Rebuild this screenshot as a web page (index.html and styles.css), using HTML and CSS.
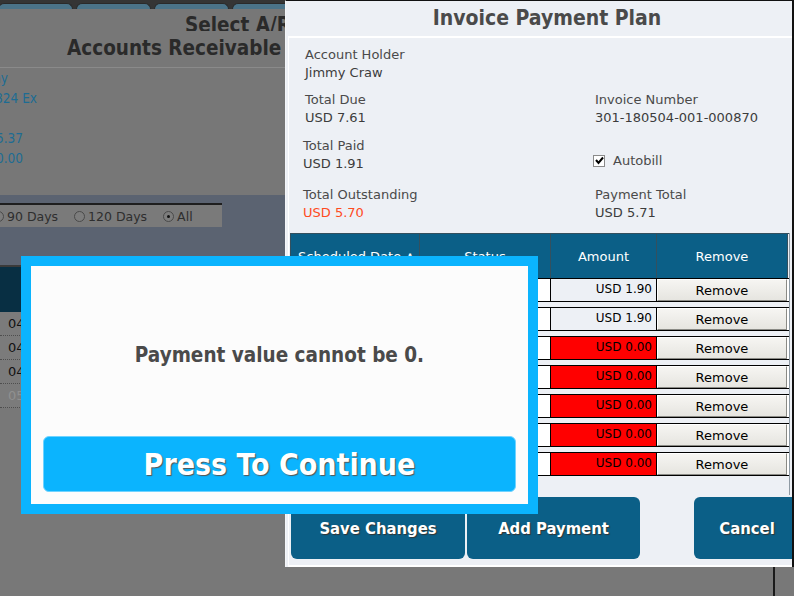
FILE: index.html
```html
<!DOCTYPE html>
<html lang="en">
<head>
    <meta charset="UTF-8">
    <meta name="viewport" content="width=device-width, initial-scale=1.0">
    <title>Invoice Payment Plan</title>
    <link rel="stylesheet" href="styles.css">
</head>
<body>
    <!-- Accounts receivable screen, dimmed behind the popups -->
    <div class="app">
        <div class="tabs">
            <span class="tab"></span>
            <span class="tab"></span>
            <span class="tab"></span>
            <span class="tab"></span>
        </div>

        <div class="ar-header">
            <div class="ar-subtitle"><span>Select A/R Account</span></div>
            <div class="ar-title">Accounts Receivable</div>
        </div>

        <div class="ar-info">
            <div class="ar-values">
                <span class="end-far">Jimmy</span>
                <span>Acct 1824 Ex</span>
                <span>&nbsp;</span>
                <span class="end-mid">USD 5.37</span>
                <span class="end-mid">USD 0.00</span>
            </div>
        </div>

        <div class="filter-area">
            <div class="filter-bar">
                <label class="radio"><span class="radio-dot"></span>90 Days</label>
                <label class="radio"><span class="radio-dot"></span>120 Days</label>
                <label class="radio"><span class="radio-dot checked"></span>All</label>
            </div>
        </div>

        <div class="ar-table">
            <div class="ar-table-head"></div>
            <div class="ar-row">04/12/2018</div>
            <div class="ar-row">04/19/2018</div>
            <div class="ar-row">04/26/2018</div>
            <div class="ar-row muted">05/04/2018</div>
        </div>

        <div class="app-bottom">
            <div class="app-bottom-col"></div>
        </div>
    </div>

    <!-- Payment plan window -->
    <div class="plan-window">
        <div class="plan-title">Invoice Payment Plan</div>
        <div class="plan-body">
            <div class="plan-fields">
                <div class="field row-1">
                    <div class="field-label">Account Holder</div>
                    <div class="field-value">Jimmy Craw</div>
                </div>

                <div class="field row-2">
                    <div class="field-label">Total Due</div>
                    <div class="field-value">USD 7.61</div>
                </div>
                <div class="field row-2">
                    <div class="field-label">Invoice Number</div>
                    <div class="field-value">301-180504-001-000870</div>
                </div>

                <div class="field row-3 shift">
                    <div class="field-label">Total Paid</div>
                    <div class="field-value">USD 1.91</div>
                </div>
                <div class="field row-3 autobill">
                    <span class="checkbox">
                        <svg width="9" height="9" viewBox="0 0 9 9"><path d="M1 4 L3.5 7 L8 1.5" fill="none" stroke="#000" stroke-width="2"/></svg>
                    </span>
                    Autobill
                </div>

                <div class="field row-4 shift">
                    <div class="field-label">Total Outstanding</div>
                    <div class="field-value outstanding">USD 5.70</div>
                </div>
                <div class="field row-4">
                    <div class="field-label">Payment Total</div>
                    <div class="field-value">USD 5.71</div>
                </div>
            </div>

            <div class="payments">
                <div class="payments-head">
                    <div class="head-cell date">Scheduled Date &#8743;</div>
                    <div class="head-cell">Status</div>
                    <div class="head-cell">Amount</div>
                    <div class="head-cell">Remove</div>
                </div>
                <div class="payment-row">
                    <div class="cell"></div><div class="cell"></div>
                    <div class="cell amount">USD 1.90</div>
                    <div class="cell"><button class="remove-btn">Remove</button></div>
                </div>
                <div class="payment-row">
                    <div class="cell"></div><div class="cell"></div>
                    <div class="cell amount">USD 1.90</div>
                    <div class="cell"><button class="remove-btn">Remove</button></div>
                </div>
                <div class="payment-row">
                    <div class="cell"></div><div class="cell"></div>
                    <div class="cell amount zero">USD 0.00</div>
                    <div class="cell"><button class="remove-btn">Remove</button></div>
                </div>
                <div class="payment-row">
                    <div class="cell"></div><div class="cell"></div>
                    <div class="cell amount zero">USD 0.00</div>
                    <div class="cell"><button class="remove-btn">Remove</button></div>
                </div>
                <div class="payment-row">
                    <div class="cell"></div><div class="cell"></div>
                    <div class="cell amount zero">USD 0.00</div>
                    <div class="cell"><button class="remove-btn">Remove</button></div>
                </div>
                <div class="payment-row">
                    <div class="cell"></div><div class="cell"></div>
                    <div class="cell amount zero">USD 0.00</div>
                    <div class="cell"><button class="remove-btn">Remove</button></div>
                </div>
                <div class="payment-row">
                    <div class="cell"></div><div class="cell"></div>
                    <div class="cell amount zero">USD 0.00</div>
                    <div class="cell"><button class="remove-btn">Remove</button></div>
                </div>
            </div>

            <div class="plan-actions">
                <button class="action-btn save">Save Changes</button>
                <button class="action-btn add">Add Payment</button>
                <button class="action-btn cancel">Cancel</button>
            </div>
        </div>
    </div>

    <!-- Validation message -->
    <div class="alert">
        <div class="alert-message">Payment value cannot be 0.</div>
        <button class="alert-btn">Press To Continue</button>
    </div>
</body>
</html>
```

FILE: styles.css
```css
* {
    margin: 0;
    padding: 0;
    box-sizing: border-box;
}

body {
    font-family: "DejaVu Sans", "Liberation Sans", sans-serif;
    font-size: 13px;
    width: 794px;
    height: 596px;
    overflow: hidden;
    background: #787878;
    position: relative;
}

button {
    font-family: inherit;
}

/* headings and big buttons use the narrow bold face */
.ar-header,
.plan-title,
.action-btn,
.alert-message,
.alert-btn {
    font-family: "DejaVu Sans Condensed", "DejaVu Sans", sans-serif;
    font-weight: bold;
}

/* ---------- background screen ---------- */

.app {
    display: flex;
    flex-direction: column;
    height: 596px;
}

.tabs {
    height: 9px;
    background: #353535;
    padding-top: 3px;
    display: flex;
    gap: 3px;
    overflow: hidden;
}

.tab {
    width: 75px;
    flex-shrink: 0;
    background: #4b7388;
    border: 1px solid #2a2a2a;
    border-bottom: none;
    border-radius: 6px 6px 0 0;
}

.tab:first-child {
    margin-left: -2px;
}

.ar-header {
    background: #777777;
    height: 59px;
    border-bottom: 1px solid #8a8a8a;
    color: #2a2a2a;
    font-size: 20.5px;
}

.ar-subtitle {
    height: 22px;
    overflow: hidden;
    padding-left: 185px;
    white-space: nowrap;
}

.ar-subtitle span {
    display: block;
    line-height: 33px;
}

.ar-title {
    padding-left: 67px;
    margin-top: 5px;
    line-height: 24px;
    white-space: nowrap;
}

.ar-info {
    background: #777777;
    height: 127px;
}

.ar-values {
    width: 37px;
    display: flex;
    flex-direction: column;
    align-items: flex-end;
    color: #1d6c93;
    font-family: "DejaVu Sans Condensed", "DejaVu Sans", sans-serif;
    font-size: 13.5px;
    line-height: 20px;
    white-space: nowrap;
}

.ar-values .end-far {
    margin-right: 29px;
}

.ar-values .end-mid {
    margin-right: 14px;
}

.filter-area {
    background: #5b6371;
    height: 70px;
    padding-top: 8px;
}

.filter-bar {
    width: 222px;
    height: 24px;
    background: #7a7a7a;
    border-top: 2px solid #1e1e1e;
    display: flex;
    align-items: center;
    gap: 16px;
    color: #2e2e2e;
    font-size: 12.5px;
}

.radio {
    display: flex;
    align-items: center;
    gap: 3px;
}

.radio:first-child {
    margin-left: -7px;
}

.radio-dot {
    width: 11px;
    height: 11px;
    border-radius: 50%;
    border: 1px solid #4a4a4a;
    background: #7d7d7d;
    position: relative;
}

.radio-dot.checked::after {
    content: "";
    position: absolute;
    left: 3px;
    top: 3px;
    width: 3px;
    height: 3px;
    border-radius: 50%;
    background: #111;
}

.ar-table {
    border-top: 2px solid #3a3a3a;
}

.ar-table-head {
    height: 45px;
    background: #082f43;
}

.ar-row {
    height: 24px;
    line-height: 24px;
    background: #7b7b7b;
    border-bottom: 1px dotted #4e4e4e;
    padding-left: 8px;
    color: #111;
    font-size: 13px;
}

.ar-row.muted {
    color: #909090;
}

.app-bottom {
    flex: 1;
    display: flex;
}

.app-bottom-col {
    width: 775px;
    border-right: 2px solid #1a1a1a;
}

/* ---------- payment plan window ---------- */

.plan-window {
    position: absolute;
    left: 285px;
    top: 0;
    width: 509px;
    height: 567px;
    background: #edf0f5;
    border-top: 1px solid #111;
    border-right: 2px solid #111;
    border-left: 1px solid #f4f6f9;
    display: flex;
    flex-direction: column;
}

.plan-title {
    height: 35px;
    line-height: 35px;
    text-align: center;
    padding-left: 16px;
    font-size: 21px;
    color: #4a4a4a;
}

.plan-body {
    flex: 1;
    margin-left: 2px;
    border-top: 2px solid #ffffff;
    border-left: 1px solid #ffffff;
    border-bottom: 2px solid #ffffff;
    overflow: hidden;
    display: flex;
    flex-direction: column;
}

.plan-fields {
    display: grid;
    grid-template-columns: 290px 1fr;
    padding: 8px 0 0 16px;
    color: #4a4a4a;
    line-height: 18px;
}

.field-value {
    color: #3c3c3c;
}

.row-1 {
    grid-column: 1 / span 2;
}

.row-2 {
    margin-top: 9px;
}

.row-3 {
    margin-top: 10px;
}

.row-4 {
    margin-top: 13px;
}

.field.shift {
    margin-left: -2px;
}

.field-value.outstanding {
    color: #ff4b1e;
}

.autobill {
    display: flex;
    align-items: center;
    gap: 8px;
    margin-left: -2px;
    padding-top: 11px;
}

.checkbox {
    width: 12px;
    height: 12px;
    background: #fff;
    border: 1px solid #8a8a8a;
    display: flex;
    align-items: center;
    justify-content: center;
}

.payments {
    margin: 11px 0 0 1px;
    width: 500px;
    border-right: 1px solid #8e9aa4;
    height: 262px;
}

.payments-head {
    display: grid;
    grid-template-columns: 129px 131px 106px 131px;
    height: 45px;
    border-top: 1px solid #34505e;
    border-left: 1px solid #34505e;
}

.head-cell {
    background: #0b5f87;
    color: #fff;
    display: flex;
    align-items: center;
    justify-content: center;
    border-right: 1px solid #34505e;
}

.head-cell.date {
    justify-content: flex-start;
    padding-left: 7px;
}

.payment-row {
    display: grid;
    grid-template-columns: 129px 131px 106px 131px;
    height: 24px;
    margin-bottom: 5px;
    border-top: 1px solid #000;
    border-bottom: 1px solid #000;
    background: #fff;
}

.cell {
    border-left: 1px solid #000;
}

.cell.amount {
    background: #edf0f5;
    color: #000;
    text-align: right;
    padding-right: 4px;
    font-size: 12px;
    line-height: 21px;
}

.cell.amount.zero {
    background: #ff0000;
}

.remove-btn {
    width: 100%;
    height: 22px;
    background: linear-gradient(#f6f5f2, #e6e5e0);
    border: 1px solid;
    border-color: #ffffff #8a8a85 #8a8a85 #ffffff;
    font-size: 13px;
    color: #000;
}

.plan-actions {
    display: flex;
    gap: 2px;
    padding: 2px 0 0 2px;
}

.action-btn {
    height: 62px;
    background: #0b5f87;
    color: #fff;
    border: none;
    border-radius: 6px;
    font-size: 16.5px;
    text-shadow: 1px 1px 1px #333;
}

.action-btn.save {
    width: 174px;
}

.action-btn.add {
    width: 173px;
}

.action-btn.cancel {
    width: 106px;
    margin-left: auto;
    margin-right: -8px;
}

/* ---------- validation popup ---------- */

.alert {
    position: absolute;
    left: 21px;
    top: 256px;
    width: 517px;
    height: 258px;
    background: #fcfcfc;
    border: 10px solid #0bb4fe;
    display: flex;
    flex-direction: column;
    padding: 8px 12px 12px 12px;
}

.alert-message {
    flex: 1;
    display: flex;
    align-items: center;
    justify-content: center;
    font-size: 20.5px;
    color: #4a4a4a;
}

.alert-btn {
    height: 56px;
    background: #0bb4fe;
    border: 1px solid #6fd3ff;
    border-radius: 6px;
    color: #fff;
    font-size: 30px;
    text-shadow: 1px 1px 1px #555;
}
```
